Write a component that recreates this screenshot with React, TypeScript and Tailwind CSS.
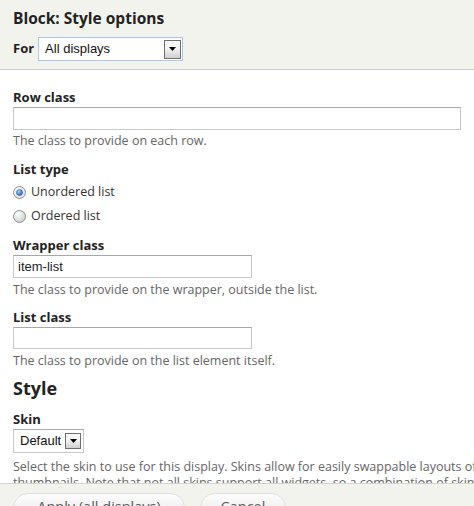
import React from 'react';

const sans = "font-['Open_Sans','DejaVu_Sans',sans-serif]";
const arial = "font-['Liberation_Sans',Arial,sans-serif]";

const Arrow = ({ size }: { size: 'lg' | 'sm' }) => (
  <span
    className={
      size === 'lg'
        ? 'flex h-[19px] w-[17px] items-center justify-center border border-[#707070] bg-gradient-to-b from-[#f6f6f6] from-40% to-[#cfcfcf]'
        : 'flex h-[16px] w-[16px] items-center justify-center border border-[#707070] bg-gradient-to-b from-[#f6f6f6] from-40% to-[#cfcfcf]'
    }
  >
    <svg width="7" height="4" viewBox="0 0 7 4">
      <path d="M0 0h7L3.5 4z" fill="#000" />
    </svg>
  </span>
);

const Radio = ({ checked, label, className }: { checked?: boolean; label: string; className: string }) => (
  <div className={`flex h-[20px] items-center ${className}`}>
    <svg width="13" height="13" viewBox="0 0 13 13" className="shrink-0">
      <defs>
        <radialGradient id={checked ? 'rOn' : 'rOff'} cx="0.35" cy="0.3" r="0.8">
          <stop offset="0" stopColor="#ffffff" />
          <stop offset="1" stopColor={checked ? '#d9dde3' : '#c9c9c9'} />
        </radialGradient>
        <radialGradient id="dot" cx="0.35" cy="0.3" r="0.8">
          <stop offset="0" stopColor="#9ed0ff" />
          <stop offset="1" stopColor="#1f5fb8" />
        </radialGradient>
      </defs>
      <circle cx="6.5" cy="6.5" r="6" fill={`url(#${checked ? 'rOn' : 'rOff'})`} stroke="#8e8f8f" />
      {checked && <circle cx="6.5" cy="6.5" r="3" fill="url(#dot)" stroke="#2b4f85" strokeWidth="0.6" />}
    </svg>
    <span className={`ml-[5px] text-[12.5px] leading-[20px] text-[#333] ${sans}`}>{label}</span>
  </div>
);

const Label = ({ children, className }: { children: React.ReactNode; className: string }) => (
  <div className={`h-[16px] text-[13px] font-bold leading-[16px] text-[#222] ${sans} ${className}`}>{children}</div>
);

const Desc = ({ children, className }: { children: React.ReactNode; className: string }) => (
  <div className={`whitespace-nowrap text-[12.5px] leading-[16px] text-[#666] ${sans} ${className}`}>{children}</div>
);

const TextInput = ({ value, className }: { value?: string; className: string }) => (
  <div
    className={`flex items-center border border-[#c8c8c8] border-t-[#a8a8a8] bg-white pl-[4px] text-[13px] text-[#222] ${arial} ${className}`}
  >
    {value}
  </div>
);

export default function App() {
  return (
    <div className="flex h-[506px] w-[474px] flex-col overflow-hidden bg-white">
      <div className="h-[70px] shrink-0 border-b border-[#cccccc] bg-[#f3f3ee] px-[13px] pt-[9px]">
        <div className={`h-[18px] text-[15.5px] font-bold leading-[18px] text-[#222] ${sans}`}>Block: Style options</div>
        <div className="mt-[10px] flex h-[24px] items-center">
          <span className={`text-[13px] font-bold text-[#222] ${sans}`}>For</span>
          <div className="ml-[4px] flex h-[24px] w-[145px] items-center justify-between border border-[#a9c8ee] bg-white pl-[6px] pr-[1px]">
            <span className={`text-[13px] text-[#111] ${arial}`}>All displays</span>
            <Arrow size="lg" />
          </div>
        </div>
      </div>

      <div className="min-h-0 flex-1 overflow-hidden px-[13px]">
        <Label className="mt-[19px]">Row class</Label>
        <TextInput className="mt-[2px] h-[23px] w-[448px]" />
        <Desc className="mt-[3px]">The class to provide on each row.</Desc>

        <Label className="mt-[12px]">List type</Label>
        <Radio checked label="Unordered list" className="mt-[5px]" />
        <Radio label="Ordered list" className="mt-[4px]" />

        <Label className="mt-[11px]">Wrapper class</Label>
        <TextInput value="item-list" className="mt-[2px] h-[23px] w-[239px]" />
        <Desc className="mt-[4px]">The class to provide on the wrapper, outside the list.</Desc>

        <Label className="mt-[11px]">List class</Label>
        <TextInput className="mt-[2px] h-[22px] w-[239px]" />
        <Desc className="mt-[4px]">The class to provide on the list element itself.</Desc>

        <h2 className={`mt-[7px] h-[24px] text-[18px] font-bold leading-[24px] text-[#222] ${sans}`}>Style</h2>

        <Label className="mt-[11px]">Skin</Label>
        <div className="mt-[2px] flex h-[24px] w-[71px] items-center justify-between border border-[#c8c8c8] border-t-[#a8a8a8] bg-white pl-[6px] pr-[2px]">
          <span className={`text-[13px] text-[#111] ${arial}`}>Default</span>
          <Arrow size="sm" />
        </div>
        <Desc className="mt-[6px]">
          <div>Select the skin to use for this display. Skins allow for easily swappable layouts of things like next/prev links and</div>
          <div>thumbnails. Note that not all skins support all widgets, so a combination of skins and widgets may lead to unexpected results.</div>
        </Desc>
      </div>

      <div className="flex h-[23px] shrink-0 gap-[15px] overflow-hidden border-t border-[#d4d4d0] bg-[#f3f3ee] px-[13px] pt-[9px]">
        <button
          className={`h-[30px] w-[172px] shrink-0 rounded-[15px] border border-[#e0e0dc] bg-gradient-to-b from-[#fdfdfd] to-[#e6e6e6] pb-[2px] text-[14.5px] text-[#5a5a5a] ${sans}`}
        >
          Apply (all displays)
        </button>
        <button
          className={`h-[30px] w-[86px] shrink-0 rounded-[15px] border border-[#e0e0dc] bg-gradient-to-b from-[#fdfdfd] to-[#e6e6e6] pb-[2px] text-[14.5px] text-[#5a5a5a] ${sans}`}
        >
          Cancel
        </button>
      </div>
    </div>
  );
}
